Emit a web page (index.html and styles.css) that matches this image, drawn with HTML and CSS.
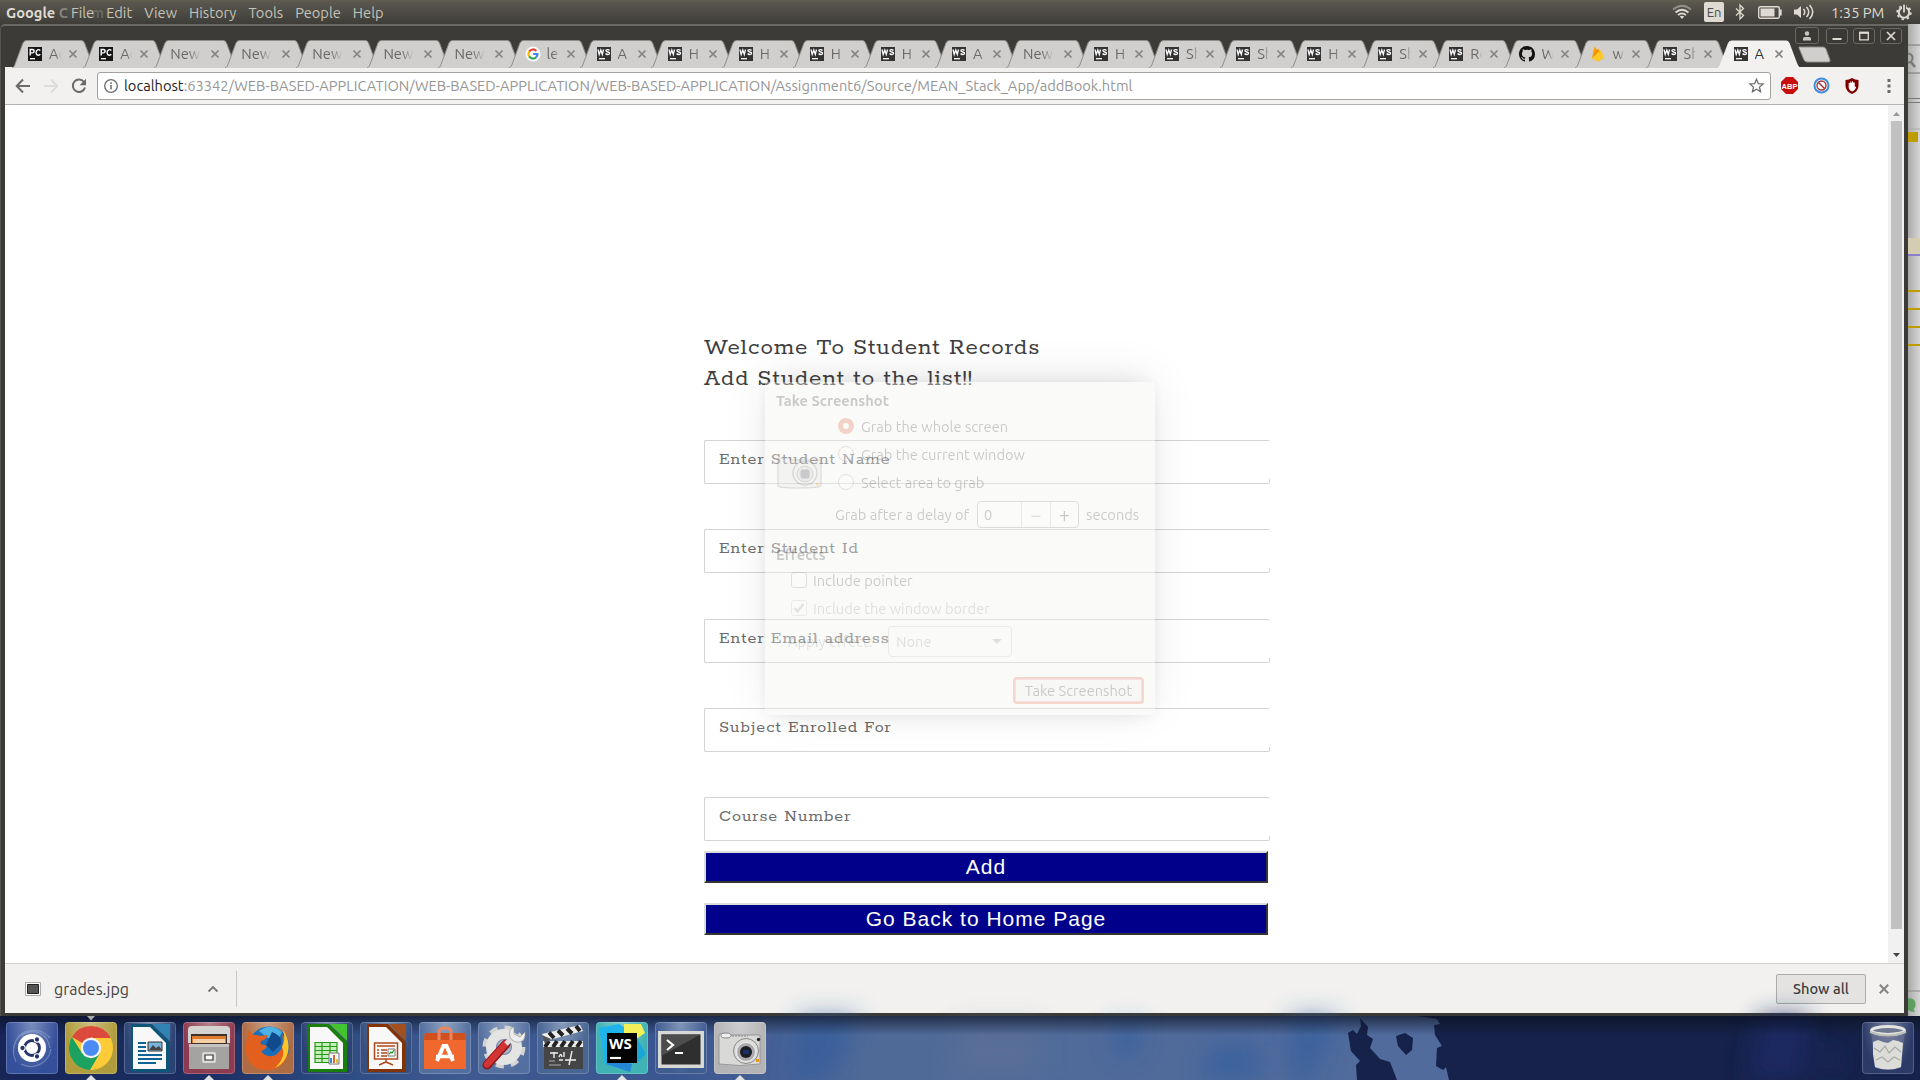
FILE: index.html
```html
<!DOCTYPE html>
<html lang="en">
<head>
<meta charset="utf-8">
<title>Student Records</title>
<link rel="stylesheet" href="styles.css">
</head>
<body>
<svg class="defs" width="0" height="0">
  <symbol id="tab" viewBox="0 0 85 28"><path d="M0 28C2 27 2.500 26 3.500 23L11 3Q12 .5 14.500 .5H69.500Q71.500 .5 72.500 3L80 23Q82 28 84.500 28Z" fill="#d0cfcd"/><path d="M0 28C2 27 2.500 26 3.500 23L11 3Q12 .5 14.500 .5H69.500Q71.500 .5 72.500 3L80 23Q82 28 84.500 28" fill="none" stroke="#8f8e8b"/></symbol>
  <symbol id="tab-on" viewBox="0 0 85 28"><path d="M0 28C2 27 2.500 26 3.500 23L11 3Q12 .5 14.500 .5H69.500Q71.500 .5 72.500 3L80 23Q82 28 84.500 28Z" fill="#f2f1ef"/></symbol>
  <symbol id="x" viewBox="0 0 10 10"><path d="M1.500 1.500l7 7M8.500 1.500l-7 7" stroke="#858482" stroke-width="1.700"/></symbol>
  <symbol id="ws" viewBox="0 0 14 14"><path d="M0 0h14v14H0z" fill="#333"/><path d="M2 11.700h6" stroke="#fff" stroke-width="1.300"/><path d="M1 2.500l1.200 5L3.800 3l1.500 4.500 1.200-5M12.500 3.500c-1-1.300-3.700-1.200-3.600.3.100 1.600 3.700.8 3.700 2.500 0 1.500-3 1.600-4 .2" fill="none" stroke="#fff" stroke-width="1.300"/></symbol>
  <symbol id="pc" viewBox="0 0 14 14"><path d="M0 0h14v14H0z" fill="#161616"/><path d="M2 11.700h5" stroke="#fff" stroke-width="1.300"/><path d="M2.200 8.500V2.500h2c2.500 0 2.500 3.400 0 3.400H2.500M12.300 3.500c-1.500-1.700-4.200-.7-4.200 2s2.700 3.500 4.200 1.800" fill="none" stroke="#fff" stroke-width="1.400"/></symbol>
</svg>

<header class="panel">
  <div class="app-title">Google <i class="f2">C</i><i class="f0">hro</i><i class="f1">m</i><i class="f0">e</i></div>
  <nav class="menu"><span>File</span><span>Edit</span><span>View</span><span>History</span><span>Tools</span><span>People</span><span>Help</span></nav>
  <div class="tray">
    <svg class="wifi" width="20" height="14" viewBox="0 0 20 14"><g fill="none" stroke="#dfdbd2" stroke-width="1.700"><path d="M1 4.500Q10-3 19 4.500" opacity=".45"/><path d="M3.500 7.500Q10 2 16.500 7.500M6 10.200Q10 6.500 14 10.200"/></g><path d="M7.800 11.500q2.200-1.700 4.400 0L10 14z" fill="#dfdbd2"/></svg>
    <span class="lang">En</span>
    <svg class="bt" width="10" height="16" viewBox="0 0 10 16"><path d="M1 4.500l7.500 7L5 15V1l3.500 3.500-7.500 7" fill="none" stroke="#dfdbd2" stroke-width="1.300"/></svg>
    <svg class="bat" width="24" height="13" viewBox="0 0 24 13"><rect x=".7" y=".7" width="20.600" height="11.600" rx="1.500" fill="none" stroke="#dfdbd2" stroke-width="1.400"/><path d="M2.500 2.500h14v8h-14zM22 3.500h1.700v6H22z" fill="#dfdbd2"/></svg>
    <svg class="vol" width="21" height="16" viewBox="0 0 21 16"><path d="M0 5.500h3L7 2v12l-4-3.500H0z" fill="#dfdbd2"/><path d="M9.500 5q2.500 3 0 6M12.500 3q4.500 5 0 10M15.500 1q6.500 7 0 14" fill="none" stroke="#dfdbd2" stroke-width="1.500"/></svg>
    <span class="clock">1:35 PM</span>
    <svg class="gear" width="16" height="16" viewBox="0 0 16 16"><circle cx="8" cy="8.500" r="5.200" fill="none" stroke="#dfdbd2" stroke-width="2"/><circle cx="8" cy="8.500" r="6.800" fill="none" stroke="#dfdbd2" stroke-width="1.800" stroke-dasharray="2.400 2.940"/><path d="M6 0h4v8H6z" fill="#4b4a44"/><path d="M8 .5v8" stroke="#dfdbd2" stroke-width="1.800"/></svg>
  </div>
</header>

<div class="desk">
<main class="window">
  <div class="titlebar">
    <div class="tabs">
      <div class="tab"><svg class="bg"><use href="#tab"/></svg><svg class="ic"><use href="#pc"/></svg><span>Ad</span><svg class="cl"><use href="#x"/></svg></div>
      <div class="tab"><svg class="bg"><use href="#tab"/></svg><svg class="ic"><use href="#pc"/></svg><span>Ad</span><svg class="cl"><use href="#x"/></svg></div>
      <div class="tab new"><svg class="bg"><use href="#tab"/></svg><span>New</span><svg class="cl"><use href="#x"/></svg></div>
      <div class="tab new"><svg class="bg"><use href="#tab"/></svg><span>New</span><svg class="cl"><use href="#x"/></svg></div>
      <div class="tab new"><svg class="bg"><use href="#tab"/></svg><span>New</span><svg class="cl"><use href="#x"/></svg></div>
      <div class="tab new"><svg class="bg"><use href="#tab"/></svg><span>New</span><svg class="cl"><use href="#x"/></svg></div>
      <div class="tab new"><svg class="bg"><use href="#tab"/></svg><span>New</span><svg class="cl"><use href="#x"/></svg></div>
      <div class="tab"><svg class="bg"><use href="#tab"/></svg><svg class="ic" viewBox="0 0 14 14"><circle cx="7" cy="7" r="7.500" fill="#fff"/><g fill="none" stroke-width="2.200"><path d="M3.200 4.600A4.500 4.500 0 0 1 10.300 3.900" stroke="#ea4335"/><path d="M3.200 4.600a4.500 4.500 0 0 0 0 4.800" stroke="#fbbc05"/><path d="M3.200 9.400a4.500 4.500 0 0 0 6.800 1" stroke="#34a853"/><path d="M10 10.400A4.500 4.500 0 0 0 11.500 7H7.200" stroke="#4285f4"/></g></svg><span>lea</span><svg class="cl"><use href="#x"/></svg></div>
      <div class="tab"><svg class="bg"><use href="#tab"/></svg><svg class="ic"><use href="#ws"/></svg><span>A</span><svg class="cl"><use href="#x"/></svg></div>
      <div class="tab"><svg class="bg"><use href="#tab"/></svg><svg class="ic"><use href="#ws"/></svg><span>H</span><svg class="cl"><use href="#x"/></svg></div>
      <div class="tab"><svg class="bg"><use href="#tab"/></svg><svg class="ic"><use href="#ws"/></svg><span>H</span><svg class="cl"><use href="#x"/></svg></div>
      <div class="tab"><svg class="bg"><use href="#tab"/></svg><svg class="ic"><use href="#ws"/></svg><span>H</span><svg class="cl"><use href="#x"/></svg></div>
      <div class="tab"><svg class="bg"><use href="#tab"/></svg><svg class="ic"><use href="#ws"/></svg><span>H</span><svg class="cl"><use href="#x"/></svg></div>
      <div class="tab"><svg class="bg"><use href="#tab"/></svg><svg class="ic"><use href="#ws"/></svg><span>A</span><svg class="cl"><use href="#x"/></svg></div>
      <div class="tab new"><svg class="bg"><use href="#tab"/></svg><span>New</span><svg class="cl"><use href="#x"/></svg></div>
      <div class="tab"><svg class="bg"><use href="#tab"/></svg><svg class="ic"><use href="#ws"/></svg><span>H</span><svg class="cl"><use href="#x"/></svg></div>
      <div class="tab"><svg class="bg"><use href="#tab"/></svg><svg class="ic"><use href="#ws"/></svg><span>Sh</span><svg class="cl"><use href="#x"/></svg></div>
      <div class="tab"><svg class="bg"><use href="#tab"/></svg><svg class="ic"><use href="#ws"/></svg><span>Sh</span><svg class="cl"><use href="#x"/></svg></div>
      <div class="tab"><svg class="bg"><use href="#tab"/></svg><svg class="ic"><use href="#ws"/></svg><span>H</span><svg class="cl"><use href="#x"/></svg></div>
      <div class="tab"><svg class="bg"><use href="#tab"/></svg><svg class="ic"><use href="#ws"/></svg><span>Sh</span><svg class="cl"><use href="#x"/></svg></div>
      <div class="tab"><svg class="bg"><use href="#tab"/></svg><svg class="ic"><use href="#ws"/></svg><span>Re</span><svg class="cl"><use href="#x"/></svg></div>
      <div class="tab"><svg class="bg"><use href="#tab"/></svg><svg class="ic gh" viewBox="0 0 16 16"><path d="M8 0C3.580 0 0 3.580 0 8c0 3.540 2.290 6.530 5.470 7.590.4.070.55-.17.55-.38 0-.19-.010-.82-.010-1.490-2.010.37-2.530-.49-2.690-.94-.090-.23-.48-.94-.82-1.130-.28-.15-.68-.52-.010-.53.63-.010 1.080.58 1.230.82.72 1.210 1.870.87 2.330.66.070-.52.28-.87.51-1.070-1.780-.2-3.640-.89-3.640-3.950 0-.87.31-1.590.82-2.150-.080-.2-.36-1.020.080-2.120 0 0 .67-.21 2.200.82.64-.18 1.320-.27 2-.27s1.360.090 2 .27c1.530-1.040 2.200-.82 2.200-.82.44 1.100.16 1.920.080 2.120.51.56.82 1.270.82 2.150 0 3.070-1.870 3.750-3.650 3.950.29.25.54.73.54 1.480 0 1.070-.010 1.930-.010 2.200 0 .21.15.46.55.38A8.010 8.010 0 0 0 16 8c0-4.420-3.580-8-8-8z" fill="#111"/></svg><span>W</span><svg class="cl"><use href="#x"/></svg></div>
      <div class="tab"><svg class="bg"><use href="#tab"/></svg><svg class="ic" viewBox="0 0 14 14"><path d="M1 11L3.500-.5 6 3l1.200-1.500L12.500 11 7 14.500z" fill="#ffa000"/><path d="M1 11l9.500-8 2 8L7 14.500z" fill="#ffca28"/><path d="M1 11l6-7-1-1z" fill="#f57c00"/></svg><span>w</span><svg class="cl"><use href="#x"/></svg></div>
      <div class="tab"><svg class="bg"><use href="#tab"/></svg><svg class="ic"><use href="#ws"/></svg><span>Sh</span><svg class="cl"><use href="#x"/></svg></div>
      <div class="tab on"><svg class="bg"><use href="#tab-on"/></svg><svg class="ic"><use href="#ws"/></svg><span>A</span><svg class="cl"><use href="#x"/></svg></div>
    </div>
    <svg class="newtab" width="34" height="17" viewBox="0 0 34 17"><path d="M1 1h24q2 0 3 2l4 11q.5 2-1.500 2H9q-2 0-3-2L1 2z" fill="#d0cfcd" stroke="#8f8e8b"/></svg>
    <div class="winbtns">
      <div class="wb user"><svg width="12" height="12" viewBox="0 0 12 12"><circle cx="6" cy="3.500" r="2.200" fill="#c9c6bf"/><path d="M2 10.500V8.500Q2 7 4 7h4q2 0 2 1.500v2z" fill="#c9c6bf"/></svg></div>
      <div class="wb"><svg width="12" height="12" viewBox="0 0 12 12"><path d="M1.500 9h9" stroke="#dfdbd2" stroke-width="2"/></svg></div>
      <div class="wb"><svg width="12" height="12" viewBox="0 0 12 12"><path d="M1.700 2.500h8.600v7.300H1.700z" fill="none" stroke="#dfdbd2" stroke-width="1.300"/><path d="M1 2.800h10" stroke="#dfdbd2" stroke-width="2"/></svg></div>
      <div class="wb"><svg width="12" height="12" viewBox="0 0 12 12"><path d="M2 2l8 8M10 2l-8 8" stroke="#dfdbd2" stroke-width="1.700"/></svg></div>
    </div>
  </div>

  <div class="toolbar">
    <svg class="nav" width="16" height="16" viewBox="0 0 16 16"><path d="M15 8H2M8 1.500L1.700 8 8 14.500" fill="none" stroke="#6b6b6a" stroke-width="2"/></svg>
    <svg class="nav" width="16" height="16" viewBox="0 0 16 16"><path d="M1 8h13M8 1.500L14.300 8 8 14.500" fill="none" stroke="#dcdbd9" stroke-width="2"/></svg>
    <svg class="nav" width="16" height="16" viewBox="0 0 16 16"><path d="M13 4A6.200 6.200 0 1 0 14 9.500" fill="none" stroke="#6b6b6a" stroke-width="2"/><path d="M15 .8v6.400H8.600z" fill="#6b6b6a"/></svg>
    <div class="omnibox">
      <svg width="14" height="14" viewBox="0 0 14 14"><circle cx="7" cy="7" r="6.300" fill="none" stroke="#6b6b6a" stroke-width="1.300"/><path d="M7 6v4.500M7 3.300v1.600" stroke="#6b6b6a" stroke-width="1.500"/></svg>
      <p class="url"><b>localhost</b>:63342/WEB-BASED-APPLICATION/WEB-BASED-APPLICATION/WEB-BASED-APPLICATION/Assignment6/Source/MEAN_Stack_App/addBook.html</p>
      <svg class="star" width="15" height="15" viewBox="0 0 24 24"><path d="M12 2l3 7 7.500.6-5.700 5 1.700 7.400L12 18l-6.500 4 1.700-7.400-5.700-5L9 9z" fill="none" stroke="#6b6b6a" stroke-width="2"/></svg>
    </div>
    <svg width="17" height="17" viewBox="0 0 17 17"><path d="M5 0h7l5 5v7l-5 5H5l-5-5V5z" fill="#c70d0d"/><text x="8.500" y="11.600" class="abp" text-anchor="middle">ABP</text></svg>
    <svg width="17" height="17" viewBox="0 0 17 17"><circle cx="8.500" cy="8.500" r="7" fill="#fff" stroke="#3d8ede" stroke-width="2"/><circle cx="8.500" cy="8.500" r="4.500" fill="none" stroke="#a33" stroke-width="1.400"/><path d="M5.200 5.200l6.600 6.600" stroke="#a33" stroke-width="1.600"/></svg>
    <svg width="14" height="16" viewBox="0 0 14 16"><path d="M7 0q3 2 6.500 2v6q0 5-6.500 8Q.5 13 .5 8V2Q4 2 7 0z" fill="#800000"/><path d="M4.200 5v5q1 3 3 3 3-1 3.500-4l-1.500.5V4.500M5.800 8V3.500M7.500 8V3.300" fill="#fff" stroke="#fff"/></svg>
    <svg width="4" height="16" viewBox="0 0 4 16"><path d="M.5 1h3v3h-3zM.5 6.500h3v3h-3zM.5 12h3v3h-3z" fill="#6b6b6a"/></svg>
  </div>

  <section class="view">
    <div class="page">
      <form class="form">
        <h1>Welcome To Student Records<br>Add Student to the list!!</h1>
        <div class="field">Enter Student Name</div>
        <div class="field">Enter Student Id</div>
        <div class="field">Enter Email address</div>
        <div class="field">Subject Enrolled For</div>
        <div class="field">Course Number</div>
        <button type="button">Add</button>
        <button type="button">Go Back to Home Page</button>
      </form>
    </div>
    <div class="scroll">
      <svg width="7" height="4" viewBox="0 0 7 4"><path d="M3.500 0L7 4H0z" fill="#999"/></svg>
      <div class="thumb"></div>
      <svg width="7" height="4" viewBox="0 0 7 4"><path d="M3.500 4L7 0H0z" fill="#444"/></svg>
    </div>
  </section>

  <footer class="downloads">
    <svg width="16" height="14" viewBox="0 0 16 14"><path d="M.5.5h15v13H.5z" fill="#fff" stroke="#aaa"/><path d="M2.500 2.500h11v9h-11z" fill="#555" stroke="#222"/></svg>
    <span class="fname">grades.jpg</span>
    <svg class="chev" width="12" height="8" viewBox="0 0 12 8"><path d="M1.500 6.500L6 2l4.500 4.500" fill="none" stroke="#777" stroke-width="1.800"/></svg>
    <span class="sep"></span>
    <button type="button" class="showall">Show all</button>
    <svg width="12" height="12" viewBox="0 0 10 10"><use href="#x"/></svg>
  </footer>
</main>

<aside class="behind">
  <svg width="12" height="990" viewBox="0 0 12 990"><path d="M0 21h12M0 49h12M0 74.500h12M0 78.500h12" stroke="#777"/><path d="M0 105h12" stroke="#aaa"/><circle cx="0" cy="34" r="4.500" fill="none" stroke="#777" stroke-width="2"/><path d="M3 38l4 5" stroke="#777" stroke-width="2.500"/><path d="M0 108h10v10H0z" fill="#bf9c00"/><path d="M0 214h12v16H0z" fill="#d4cdb2"/><path d="M0 231h12" stroke="#8c7fc9" stroke-width="2"/><path d="M0 267h12M0 285h12M0 303h12M0 321h12" stroke="#bf9c00" stroke-width="2"/><path d="M0 967h12" stroke="#888"/><path d="M0 974q8 0 7.500 7-.5 3-2 4l1.500 3q-4 0-7-2z" fill="#5c9e5f"/></svg>
</aside>
</div>

<footer class="dock">
  <svg class="wall" width="1920" height="64" viewBox="0 0 1920 64">
    <defs><linearGradient id="sky"><stop offset="0" stop-color="#172557"/><stop offset=".11" stop-color="#1c2f63"/><stop offset=".17" stop-color="#2c4a83"/><stop offset=".24" stop-color="#3f5a90"/><stop offset=".35" stop-color="#3a5690"/><stop offset=".45" stop-color="#506a98"/><stop offset=".72" stop-color="#506b9c"/><stop offset="1" stop-color="#506b9c"/></linearGradient>
    <linearGradient id="shade" x2="0" y2="1"><stop offset="0" stop-color="#0a1020" stop-opacity=".65"/><stop offset=".3" stop-color="#0a1020" stop-opacity="0"/></linearGradient>
    <filter id="soft" x="-20%" y="-50%" width="140%" height="200%"><feGaussianBlur stdDeviation="12"/></filter>
    <filter id="edge"><feGaussianBlur stdDeviation=".7"/></filter></defs>
    <path d="M0 0h1920v64H0z" fill="url(#sky)"/>
    <g filter="url(#soft)"><path d="M800 0h60l-30 64h-40zM1110 10h35l-10 30h-20zM1210 30h50v34h-60zM1290 0h50l-30 64h-20z" fill="#2d5c9f" opacity=".6"/><path d="M960 10h80v50h-90z" fill="#5e7096" opacity=".6"/></g>
    <g filter="url(#edge)" fill="#14204a"><path d="M1418 0h502v64h-471l-3-13-3 3-7-4 1-18 5-2-7-11-1-10 6-1-3-5z"/><path d="M1357 64l-1-15 4-4-9-10-3-18 5-3 4 4 4-8-1-8 8 9-1 8 6 4-3 9 10 11 10 3 7 18zM1396 20l9-3 8 5-1 12-6 5-8-9z"/></g>
    <g filter="url(#soft)" fill="#1b2c67" opacity=".8"><path d="M1760 0h50l-5 64h-60zM1815 30l30 10-8 20z"/></g>
    <path d="M0 0h1920v64H0z" fill="url(#shade)"/>
    <path d="M87 0h8l-4 4.500z" fill="#aaa"/>
  </svg>
  <div class="launch" style="--c:#35509a">
    <svg width="52" height="52" viewBox="0 0 52 52"><g fill="none" stroke="#9fb0d8" opacity=".5" stroke-width="1.200"><path d="M27 9C12 7 3 25 10 40M44 26c-3-17-18-20-29-12M15 42c14 7 28-2 30-15M8 26c2-18 24-24 36-10"/></g><circle cx="26" cy="26" r="14" fill="#fff"/><circle cx="26" cy="26" r="7.500" fill="none" stroke="#25356b" stroke-width="2.800"/><g fill="#25356b" stroke="#fff" stroke-width="1.100"><circle cx="16.500" cy="26" r="2.700"/><circle cx="31" cy="17.500" r="2.700"/><circle cx="31" cy="34.500" r="2.700"/></g></svg></div>
  <div class="launch run" style="--c:#b09c3c">
    <svg width="52" height="52" viewBox="0 0 52 52"><circle cx="26" cy="26" r="22" fill="#fdcb37"/><path d="M26 26L6.900 15A22 22 0 0 1 45.100 15H26z" fill="#db4a3d"/><path d="M26 16h19.500q-2-4-4-6z" fill="#db4a3d"/><path d="M6.900 15A22 22 0 0 0 25 48l10-17-9 5-9-5z" fill="#1ba260"/><circle cx="26" cy="26" r="10.200" fill="#f4f4f4"/><circle cx="26" cy="26" r="8" fill="#4a8af4"/></svg></div>
  <div class="launch" style="--c:#2b4374">
    <svg width="52" height="52" viewBox="0 0 52 52"><path d="M7 2h21l18 18v30H7z" fill="#0f5479"/><path d="M9 5h17l16 16v26H9z" fill="#f8f8f8"/><path d="M29 2h17v17z" fill="#3182b5"/><path d="M14 21h8M14 25h8M14 29h8M14 33h24M14 37h24M14 41h18" stroke="#0f6296" stroke-width="2"/><path d="M24 20h14v9H24z" fill="#7ab5de" stroke="#333"/><path d="M25 28l4-5 3 3 3-2 3 4z" fill="#444"/></svg></div>
  <div class="launch run" style="--c:#8d3b50">
    <svg width="52" height="52" viewBox="0 0 52 52"><path d="M5 8q0-4 4-4h34q4 0 4 4v13H5z" fill="#d5d3d1"/><path d="M8 12h36v10H8z" fill="#40302a"/><path d="M9 14h34v7H9z" fill="#e07a2e"/><path d="M10 17h32v4H10z" fill="#f3cfa5"/><path d="M6 22h40v25H6z" fill="#a5a3a2"/><path d="M6 22h40v3H6z" fill="#c4c3c1"/><rect x="19" y="30" width="14" height="11" rx="2" fill="#d8d8d6"/><path d="M22 33h8v5h-8z" fill="#fff" stroke="#333" stroke-width="1.200"/></svg></div>
  <div class="launch run" style="--c:#ae6c45">
    <svg width="52" height="52" viewBox="0 0 52 52"><circle cx="27" cy="25" r="20.500" fill="#1b6fba"/><path d="M17 9q12-9 23 1l-4 8-10-2z" fill="#4eb1e4"/><path d="M30 10q10 3 9 12l-8 8-7-7z" fill="#114a8c"/><path d="M45 14c5 18-2 34-20 34S1 34 5 17c0-3 1-6 2-9q2 3 3 5 4-1 8 1l8-1q-2 5-7 6-2 4 4 4c4 1 0 5-4 6 4 6 12 7 17 2 5-4 6-12 4-18q3 2 4 5 2-5 0-10z" fill="#e25f1d"/><path d="M41 8c10 14 6 32-8 38 8-8 10-15 7-21q4-7 1-17z" fill="#f9c62b"/></svg></div>
  <div class="launch" style="--c:#2b4374">
    <svg width="52" height="52" viewBox="0 0 52 52"><path d="M7 2h21l18 18v30H7z" fill="#1a7e0c"/><path d="M9 5h17l16 16v26H9z" fill="#f8f8f8"/><path d="M29 2h17v17z" fill="#43c330"/><path d="M14 20h22v20H14z" fill="#c6efbd"/><path d="M14 20.500h22v20H14zM14 24.500h22M14 28.500h22M14 32.500h22M14 36.500h22M21 20v20M29 20v20" fill="none" stroke="#259b15" stroke-width="1.200"/><path d="M28 31h10v11H28z" fill="#fff" stroke="#777"/><path d="M30 36v5" stroke="#3a87c4" stroke-width="2"/><path d="M33 33v8" stroke="#d63" stroke-width="2"/><path d="M36 37v4" stroke="#eb3" stroke-width="2"/></svg></div>
  <div class="launch" style="--c:#344f80">
    <svg width="52" height="52" viewBox="0 0 52 52"><path d="M7 2h21l18 18v30H7z" fill="#843305"/><path d="M9 5h17l16 16v26H9z" fill="#f8f8f8"/><path d="M29 2h17v17z" fill="#a4501e"/><path d="M14.500 21h23v16h-23zM26 37v3l-7 3M26 40l7 3" fill="none" stroke="#b0491a" stroke-width="1.500"/><path d="M17 24h18M17 28h2M17 31h2M17 34h2M21 28h6M21 31h6M21 34h6" stroke="#b0491a" stroke-width="1.600"/><path d="M28 27h7v7h-7z" fill="#fff" stroke="#777"/><path d="M29 32l2-2 1 1 2-3" fill="none" stroke="#292" stroke-width="1.200"/></svg></div>
  <div class="launch" style="--c:#536f9f">
    <svg width="52" height="52" viewBox="0 0 52 52"><path d="M6 11h40l1 7v29H5V18z" fill="#f0682e"/><path d="M6 11h40l1 7H5z" fill="#d0501e"/><path d="M20 18V10q0-4 6-4t6 4v8" fill="none" stroke="#e98563" stroke-width="3"/><path d="M18 39l6.500-15h3L34 39" fill="none" stroke="#fff" stroke-width="4"/><path d="M17 34.500h18" stroke="#fff" stroke-width="3.500"/></svg></div>
  <div class="launch" style="--c:#536f9f">
    <svg width="52" height="52" viewBox="0 0 52 52"><circle cx="26" cy="25" r="18" fill="none" stroke="#d4d4d2" stroke-width="7" stroke-dasharray="7.500 6.630"/><circle cx="26" cy="25" r="13" fill="none" stroke="#e4e4e2" stroke-width="10"/><circle cx="26" cy="25" r="7" fill="#a9b4c6"/><path d="M9 43l19-21" stroke="#8c1414" stroke-width="9" stroke-linecap="round"/><path d="M9 42.500l19-21" stroke="#d23434" stroke-width="6.500" stroke-linecap="round"/><path d="M28 22l8-8" stroke="#ddd" stroke-width="5"/><path d="M36 5q-6 2-4 10 3 6 10 5 6-2 5-10l-5 5-6-3z" fill="#eee" stroke="#999" stroke-width=".7"/></svg></div>
  <div class="launch" style="--c:#486593">
    <svg width="52" height="52" viewBox="0 0 52 52"><path d="M5 12l38-9 3 6-38 10z" fill="#eee"/><path d="M12 10.500l5 5.500M21 8.500l5 5M30 6.500l5 5M39 4l4 5" stroke="#222" stroke-width="4"/><path d="M6 19h40v6H6z" fill="#eee"/><path d="M12 19l-4 6M20 19l-4 6M28 19l-4 6M36 19l-4 6M44 19l-4 6" stroke="#222" stroke-width="4"/><path d="M5 13l9 4-6 5z" fill="#555"/><path d="M7 25h39v22H7z" fill="#454545"/><path d="M13 31h8M17 30v6M22 35q2-5 3 0M27 30v5M22 38h4M28 38h11M35 29l-3 14" fill="none" stroke="#eee" stroke-width="1.400"/><path d="M12 43h12M12 39h6" stroke="#aaa"/></svg></div>
  <div class="launch run" style="--c:#3fb2b4">
    <svg width="52" height="52" viewBox="0 0 52 52"><path d="M3 6l20-4 12 8L20 46 9 42z" fill="#1cb4ea"/><path d="M28 2h17l4 9-13 9-8-6z" fill="#f4f05a"/><path d="M40 14l10 18-8 8-4-4z" fill="#1aa7d8"/><path d="M10 42l10-4 16 4-2 8z" fill="#2487d8"/><path d="M11 11h30v30H11z" fill="#000"/><path d="M14 36h11" stroke="#fff" stroke-width="2.200"/><text x="13" y="27" class="wstext">WS</text></svg></div>
  <div class="launch" style="--c:#405d92">
    <svg width="52" height="52" viewBox="0 0 52 52"><path d="M3 9h46v37H3z" fill="#d8d8d6"/><path d="M6.500 12.500h39v30h-39z" fill="#2f2f2f"/><path d="M6.500 12.500h39L6.500 34z" fill="#4d4d4d"/><path d="M12 18l6 5-6 5M20 31h8" fill="none" stroke="#fff" stroke-width="2.200"/></svg></div>
  <div class="launch run" style="--c:#b4b4b6">
    <svg width="52" height="52" viewBox="0 0 52 52"><path d="M6 12h9l2 1h29v29q-20 3-41 0V13z" fill="#d9d9d8" stroke="#888" stroke-width=".8"/><ellipse cx="12" cy="13.500" rx="5" ry="2.500" fill="#eee" stroke="#888"/><circle cx="32" cy="29" r="12.500" fill="#ddd" stroke="#888"/><circle cx="32" cy="30" r="9.500" fill="#aaa" stroke="#eee"/><circle cx="32" cy="30" r="6" fill="#1c1c24"/><path d="M29 28h6v4h-6z" fill="#16316b"/><circle cx="44.500" cy="17.500" r="1.700" fill="#222"/><path d="M42 37h3v3h-3z" fill="#e89b12"/><path d="M18 14h16" stroke="#888" stroke-dasharray="2 1"/></svg></div>
  <div class="launch trash" style="--c:#2c3a68">
    <svg width="52" height="52" viewBox="0 0 52 52"><path d="M9 10h34l-4 36q-13 4-26 0z" fill="#8b95b0" opacity=".35"/><path d="M11 20l5-2 5 2 5 1 5-3 5 1 5 2-2 24q-13 5-26 0l-2-13z" fill="#dcdcd8"/><path d="M12 26l6 4 5-6 4 7 6-6 6 5M14 38l6-3 6 5 6-5 6 3" fill="none" stroke="#a9a9a5" stroke-width="1.200"/><ellipse cx="26" cy="8.500" rx="16.500" ry="4" fill="#6f7890" stroke="#e4e4e0" stroke-width="3"/><path d="M8 10q18 7 36 0" fill="none" stroke="#bdbdb8" stroke-width="2"/></svg></div>
</footer>

<div class="dialog">
  <div class="inner">
    <h2>Take Screenshot</h2>
    <div class="grab">
      <svg width="46" height="34" viewBox="0 0 46 34"><path d="M1 3h12v2h31v26q-1 2-22 2T1 31z" fill="#ddd" stroke="#555"/><circle cx="28" cy="18" r="12" fill="#ddd" stroke="#666" stroke-width="1.500"/><circle cx="28" cy="19" r="8" fill="#bbb" stroke="#555"/><rect x="23.500" y="14.500" width="9" height="9" rx="2" fill="#223" /><path d="M39 28h3v3h-3z" fill="#e89b12"/></svg>
      <div class="opts">
        <label><i class="radio on"></i>Grab the whole screen</label>
        <label><i class="radio"></i>Grab the current window</label>
        <label><i class="radio"></i>Select area to grab</label>
      </div>
    </div>
    <div class="delay"><span>Grab after a delay of</span><span class="spin"><b>0</b><i>−</i><i class="plus">+</i></span><span>seconds</span></div>
    <h2 class="eff">Effects</h2>
    <label class="chk"><i class="box"></i>Include pointer</label>
    <label class="chk dim"><i class="box"><svg width="16" height="16" viewBox="0 0 16 16"><path d="M3.500 8l3 3.500L12.500 4" fill="none" stroke="#333" stroke-width="2.200"/></svg></i>Include the window border</label>
    <div class="apply dim"><span>Apply effect:</span><span class="combo">None<svg width="10" height="5" viewBox="0 0 10 5"><path d="M0 0h10L5 5z" fill="#222"/></svg></span></div>
    <span class="take">Take Screenshot</span>
  </div>
</div>
</body>
</html>
```
FILE: styles.css
```css
* { box-sizing: border-box; }
body { margin: 0; width: 1920px; height: 1080px; overflow: hidden; position: relative; display: flex; flex-direction: column; font-family: Ubuntu, "Noto Sans", sans-serif; font-size: 14.67px; background: #14204a; }
svg { display: block; flex: none; overflow: visible; }
.defs { position: absolute; }
i { font-style: normal; }
h1, h2, p { margin: 0; }

.panel { height: 24px; flex: none; display: flex; align-items: center; background: linear-gradient(#605e50, #58564e 3px, #3e3d38); color: #dfdbd2; }
.app-title { width: 65px; margin-left: 6px; white-space: nowrap; font-weight: bold; flex: none; }
.app-title .f0 { opacity: .03; }
.app-title .f1 { opacity: .2; }
.app-title .f2 { opacity: .4; }
.menu { display: flex; gap: 12px; color: #c5c2b9; }
.tray { margin-left: auto; display: flex; align-items: center; padding-right: 8px; }
.lang { background: #dfdbd2; color: #4b4a44; height: 20px; width: 20px; border-radius: 2px; margin: 0 11px 0 12px; text-align: center; line-height: 20px; font-size: 13px; }
.bat { margin-left: 13px; }
.vol { margin-left: 12px; }
.clock { margin: 0 13px 0 16px; width: 52px; white-space: nowrap; }

.desk { height: 992px; flex: none; display: flex; background: #3c3b37; }
.window { width: 1908px; display: flex; flex-direction: column; padding: 0 4px 3px; border-top: 2px solid #6a6864; border-left: 1px solid #55544f; background: #3c3b37; border-top-left-radius: 5px; }
.titlebar { height: 41px; flex: none; display: flex; position: relative; padding: 14px 0 0 6.500px; }
.tabs { display: flex; }
.tab { width: 71.070px; height: 27px; position: relative; display: flex; align-items: center; padding-left: 16.600px; font-size: 14.67px; color: #6a6967; }
.tab .bg { position: absolute; left: 0; top: 0; width: 85px; height: 28px; }
.tab .ic { width: 14px; height: 14px; position: relative; margin-right: 7px; }
.tab .gh { width: 16px; height: 16px; margin: 0 6px 0 -1px; }
.tab span { position: relative; width: 12px; overflow: hidden; white-space: nowrap; -webkit-mask: linear-gradient(90deg, #000 50%, transparent); mask: linear-gradient(90deg, #000 60%, transparent); }
.tab .cl { position: relative; width: 10px; height: 10px; margin-left: 7px; flex: none; }
.tab.new span { width: 31px; }
.tab.new .cl { margin-left: 9px; }
.tab.on { color: #333; }
.tab.on span { mask: none; -webkit-mask: none; }
.newtab { margin: 6px 0 0 10px; }
.winbtns { position: absolute; right: 2px; top: 2px; display: flex; gap: 5px; }
.wb { width: 22px; height: 16px; border: 1px solid #6b6963; border-radius: 3px; display: flex; align-items: center; justify-content: center; background: #3a3935; }
.wb.user { height: 17px; width: 24px; margin: -1px 2px 0 0; }

.toolbar { height: 38px; flex: none; background: #f2f1ef; border-bottom: 1px solid #b6b4b1; display: flex; align-items: center; padding: 0 13px 0 10px; }
.toolbar .nav { margin-right: 12px; }
.omnibox { width: 1674px; height: 28px; margin: 0 10px 0 -2px; border: 1px solid #a3a29f; border-radius: 3px; background: #fff; display: flex; align-items: center; padding: 0 6px; flex: none; }
.url { flex: 1; margin-left: 6px; color: #969696; font-size: 14.67px; white-space: nowrap; }
.url b { font-weight: normal; color: #222; }
.toolbar > svg:nth-last-child(3), .toolbar > svg:nth-last-child(2) { margin-left: 15px; }
.toolbar > svg:last-child { margin-left: auto; }
.abp { font: bold 7.500px "Liberation Sans", sans-serif; fill: #fff; }

.view { flex: 1; display: flex; background: #fff; }
.page { flex: 1; }
.form { margin: 228px 0 0 699px; width: 566px; display: flex; flex-direction: column; }
h1 { font: 400 25px/31px Rokkitt, "DejaVu Serif", serif; letter-spacing: 1px; color: #3f3f3f; margin-bottom: 45px; white-space: nowrap; }
.field { height: 44px; margin-bottom: 45.300px; border: 1px solid #d4d4d4; border-right: 0; border-radius: 2px; padding: 0 14px; font: 18px/37px Rokkitt, "DejaVu Serif", serif; letter-spacing: 1px; color: #6b6b6b; position: relative; }
.field::after { content: ""; position: absolute; right: 0; bottom: 0; width: 1px; height: 4px; background: #d4d4d4; }
.field:nth-of-type(5) { margin-bottom: 10px; }
.form button { width: 564px; height: 32px; margin-bottom: 20px; padding: 0; border: 2px outset #ddd; border-color: #ddd #888 #888 #ddd; background: #00008b; color: #fff; font: 21px/26px "Liberation Sans", sans-serif; letter-spacing: 1px; }
.scroll { width: 16px; background: #f1f1f1; display: flex; flex-direction: column; align-items: center; padding: 7px 0 6px; }
.thumb { width: 11px; height: 808px; margin: 5px 0 auto; background: #c1c1c1; }

.downloads { height: 50px; flex: none; background: #f2f1ef; border-top: 1px solid #d0cfcc; display: flex; align-items: center; padding: 0 14px 0 20px; font-size: 16px; color: #444; }
.fname { margin-left: 13px; width: 153px; }
.sep { width: 1px; height: 36px; background: #c8c7c4; margin-left: 17px; }
.showall { margin: 0 12px 0 auto; width: 90px; height: 30px; border: 1px solid #adaba8; border-radius: 2px; background: #e4e3e1; font: 500 14.67px Ubuntu, "Noto Sans", sans-serif; color: #3c3c3c; padding: 0; }
.behind { width: 12px; background: linear-gradient(90deg, #aaa, #d6d6d6); overflow: hidden; }

.dock { height: 64px; display: flex; gap: 7px; padding: 6px 6px 0; position: relative; }
.wall { position: absolute; left: 0; top: 0; }
.launch { width: 52px; height: 52px; flex: none; position: relative; border-radius: 4px; background: radial-gradient(ellipse at 50% 0, rgba(255,255,255,.35), rgba(255,255,255,0) 70%), var(--c); box-shadow: inset 0 0 0 1px rgba(255,255,255,.2); }
.launch.run::after { content: ""; position: absolute; left: 21px; bottom: -6px; border: 5px solid transparent; border-top: 0; border-bottom: 5px solid #e0e0e0; }
.trash { margin-left: auto; }
.wstext { font: bold 15px "Open Sans", sans-serif; fill: #fff; }

.dialog { position: absolute; left: 765px; top: 382px; width: 390px; height: 333px; background: rgba(242,241,240,.38); box-shadow: 0 0 10px rgba(0,0,0,.03), 0 -6px 45px rgba(0,0,0,.07), 0 -16px 22px -12px rgba(0,0,0,.06), 0 8px 22px -8px rgba(0,0,0,.07); }
.inner { opacity: .22; display: flex; flex-direction: column; height: 100%; padding: 10px 11px; color: #222; white-space: nowrap; }
.dialog h2 { font-size: 14.67px; line-height: 18px; }
.grab { display: flex; padding: 2px 0 0 1px; }
.grab > svg { margin: 43px 16px 0 0; }
.opts { display: flex; flex-direction: column; }
.opts label, .chk { height: 28px; display: flex; align-items: center; }
.radio { width: 16px; height: 16px; border-radius: 50%; border: 1px solid #888; background: #fff; margin: 0 7px 0 -1px; }
.radio.on { border: 5px solid #d8481c; }
.delay { display: flex; align-items: center; margin: 4px 0 0 59px; height: 28px; }
.spin { width: 102px; height: 27px; border: 1px solid #777; border-radius: 4px; background: #fff; display: flex; margin: 0 7px 0 8px; line-height: 25px; }
.spin b { font-weight: normal; width: 43px; padding-left: 6px; }
.spin i { flex: 1; border-left: 1px solid #aaa; text-align: center; font-size: 20px; color: #888; }
.spin .plus { color: #222; }
.eff { margin-top: 18px; }
.chk { margin-left: 15px; }
.eff + .chk { margin-top: 2px; }
.box { width: 16px; height: 16px; border: 1px solid #888; border-radius: 3px; background: #fff; margin-right: 6px; }
.box svg { margin: -1px; }
.dim { opacity: .55; }
.apply { display: flex; align-items: center; margin: 4px 0 0 12px; height: 31px; }
.apply span:first-child { width: 100px; }
.combo { width: 124px; height: 31px; border: 1px solid #777; border-radius: 4px; display: flex; align-items: center; justify-content: space-between; padding: 0 9px 0 7px; }
.take { align-self: flex-end; margin-top: 20px; width: 131px; height: 27px; border: 2px solid #e05a2a; box-shadow: inset 0 0 0 1px #e88; border-radius: 4px; text-align: center; line-height: 23px; background: #eee; }
```
